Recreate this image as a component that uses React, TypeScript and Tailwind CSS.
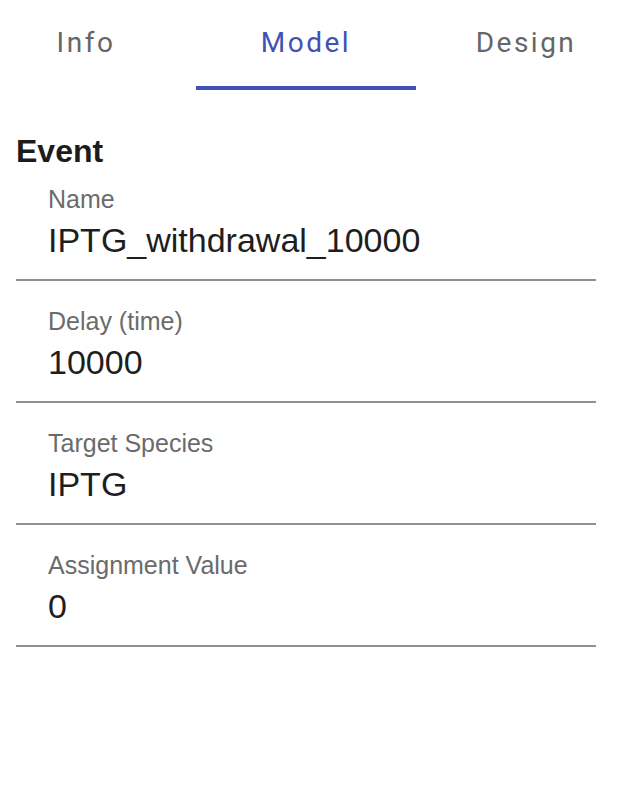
import React, { useState } from 'react';

const TABS = ['Info', 'Model', 'Design'];

const FIELDS = [
    { label: 'Name', value: 'IPTG_withdrawal_10000' },
    { label: 'Delay (time)', value: '10000' },
    { label: 'Target Species', value: 'IPTG' },
    { label: 'Assignment Value', value: '0' },
];

const Field = ({ label, value, first }: { label: string; value: string; first?: boolean }) => (
    <div className={`${first ? 'pt-[15px]' : 'pt-[25px]'} pb-[19px] pl-[32px] border-b-2 border-[#919191]`}>
        <div className="text-[25px] leading-[30px] text-[#6b6b6b]">{label}</div>
        <div className="mt-[6px] text-[34px] leading-[40px] text-[#1e1e1e]">{value}</div>
    </div>
);

export default function App() {
    const [tab, setTab] = useState('Model');

    return (
        <div className="w-[624px] h-[794px] bg-white overflow-hidden font-['Liberation_Sans',Arial,sans-serif]">
            {/* Tabs */}
            <div className="flex ml-[-24px]">
                {TABS.map(t => (
                    <button
                        key={t}
                        onClick={() => setTab(t)}
                        className={`w-[220px] h-[90px] shrink-0 flex flex-col font-['Roboto',sans-serif] text-[28px] tracking-[2.5px] ${tab === t ? 'text-[#3f51b5]' : 'text-[#666666]'}`}
                    >
                        <span className="flex-1 flex items-center justify-center">{t}</span>
                        <span className={`h-[4px] w-full ${tab === t ? 'bg-[#3f51b5]' : ''}`} />
                    </button>
                ))}
            </div>

            {/* Event form */}
            <div className="px-[16px] w-[612px] pt-[43px]">
                <h2 className="text-[32px] leading-[36px] font-bold text-[#1c1c1c]">Event</h2>
                {FIELDS.map((f, i) => (
                    <Field key={f.label} label={f.label} value={f.value} first={i === 0} />
                ))}
            </div>
        </div>
    );
}
